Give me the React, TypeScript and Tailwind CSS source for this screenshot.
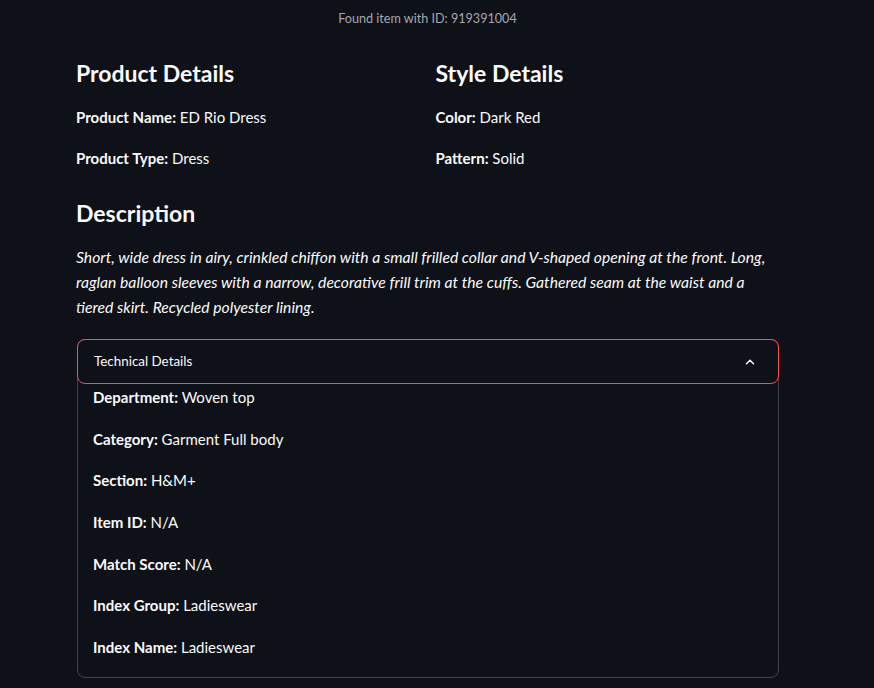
import { ChevronUp } from "lucide-react";

const product = [
  { label: "Product Name", value: "ED Rio Dress" },
  { label: "Product Type", value: "Dress" },
];

const style = [
  { label: "Color", value: "Dark Red" },
  { label: "Pattern", value: "Solid" },
];

const technical = [
  { label: "Department", value: "Woven top" },
  { label: "Category", value: "Garment Full body" },
  { label: "Section", value: "H&M+" },
  { label: "Item ID", value: "N/A" },
  { label: "Match Score", value: "N/A" },
  { label: "Index Group", value: "Ladieswear" },
  { label: "Index Name", value: "Ladieswear" },
];

function Field({ label, value }: { label: string; value: string }) {
  return (
    <p className="h-[41px] text-[15px] leading-6">
      <span className="font-bold">{label}:</span> {value}
    </p>
  );
}

export default function App() {
  return (
    <div className="min-h-[688px] bg-[#0e1117] text-[#fafafa] font-['Lato','Noto_Sans',sans-serif]">
      <div className="mx-[76px] w-[703px]">
        {/* status line */}
        <div className="pt-[9px] text-center text-[12.6px] leading-5 text-[#a5a8b0]">
          Found item with ID: 919391004
        </div>

        <div className="grid grid-cols-2 gap-4 pt-[29px]">
          <div>
            <h3 className="mb-[17px] text-[23px] font-bold leading-[30px]">Product Details</h3>
            {product.map((f) => (
              <Field key={f.label} {...f} />
            ))}
          </div>
          <div>
            <h3 className="mb-[17px] text-[23px] font-bold leading-[30px]">Style Details</h3>
            {style.map((f) => (
              <Field key={f.label} {...f} />
            ))}
          </div>
        </div>

        <h3 className="mt-[11px] text-[23px] font-bold leading-[30px]">Description</h3>
        <p className="mt-[17px] text-[15.7px] italic leading-[25px]">
          Short, wide dress in airy, crinkled chiffon with a small frilled collar and V-shaped opening at the front. Long,
          <br />
          raglan balloon sleeves with a narrow, decorative frill trim at the cuffs. Gathered seam at the waist and a
          <br />
          tiered skirt. Recycled polyester lining.
        </p>

        {/* expander */}
        <div className="mt-[19px] ml-px rounded-lg border border-[#3d4048]">
          <div className="-m-px flex h-[45px] items-center justify-between rounded-lg border border-[#ff4b4b] pl-[16px] pr-[21px]">
            <span className="text-[13.4px]">Technical Details</span>
            <ChevronUp size={14} strokeWidth={2.5} />
          </div>
          <div className="px-[15px] pt-[2px]">
            {technical.map((f) => (
              <p key={f.label} className="h-[41.7px] text-[15px] leading-6">
                <span className="font-bold">{f.label}:</span> {f.value}
              </p>
            ))}
          </div>
        </div>
      </div>
    </div>
  );
}
